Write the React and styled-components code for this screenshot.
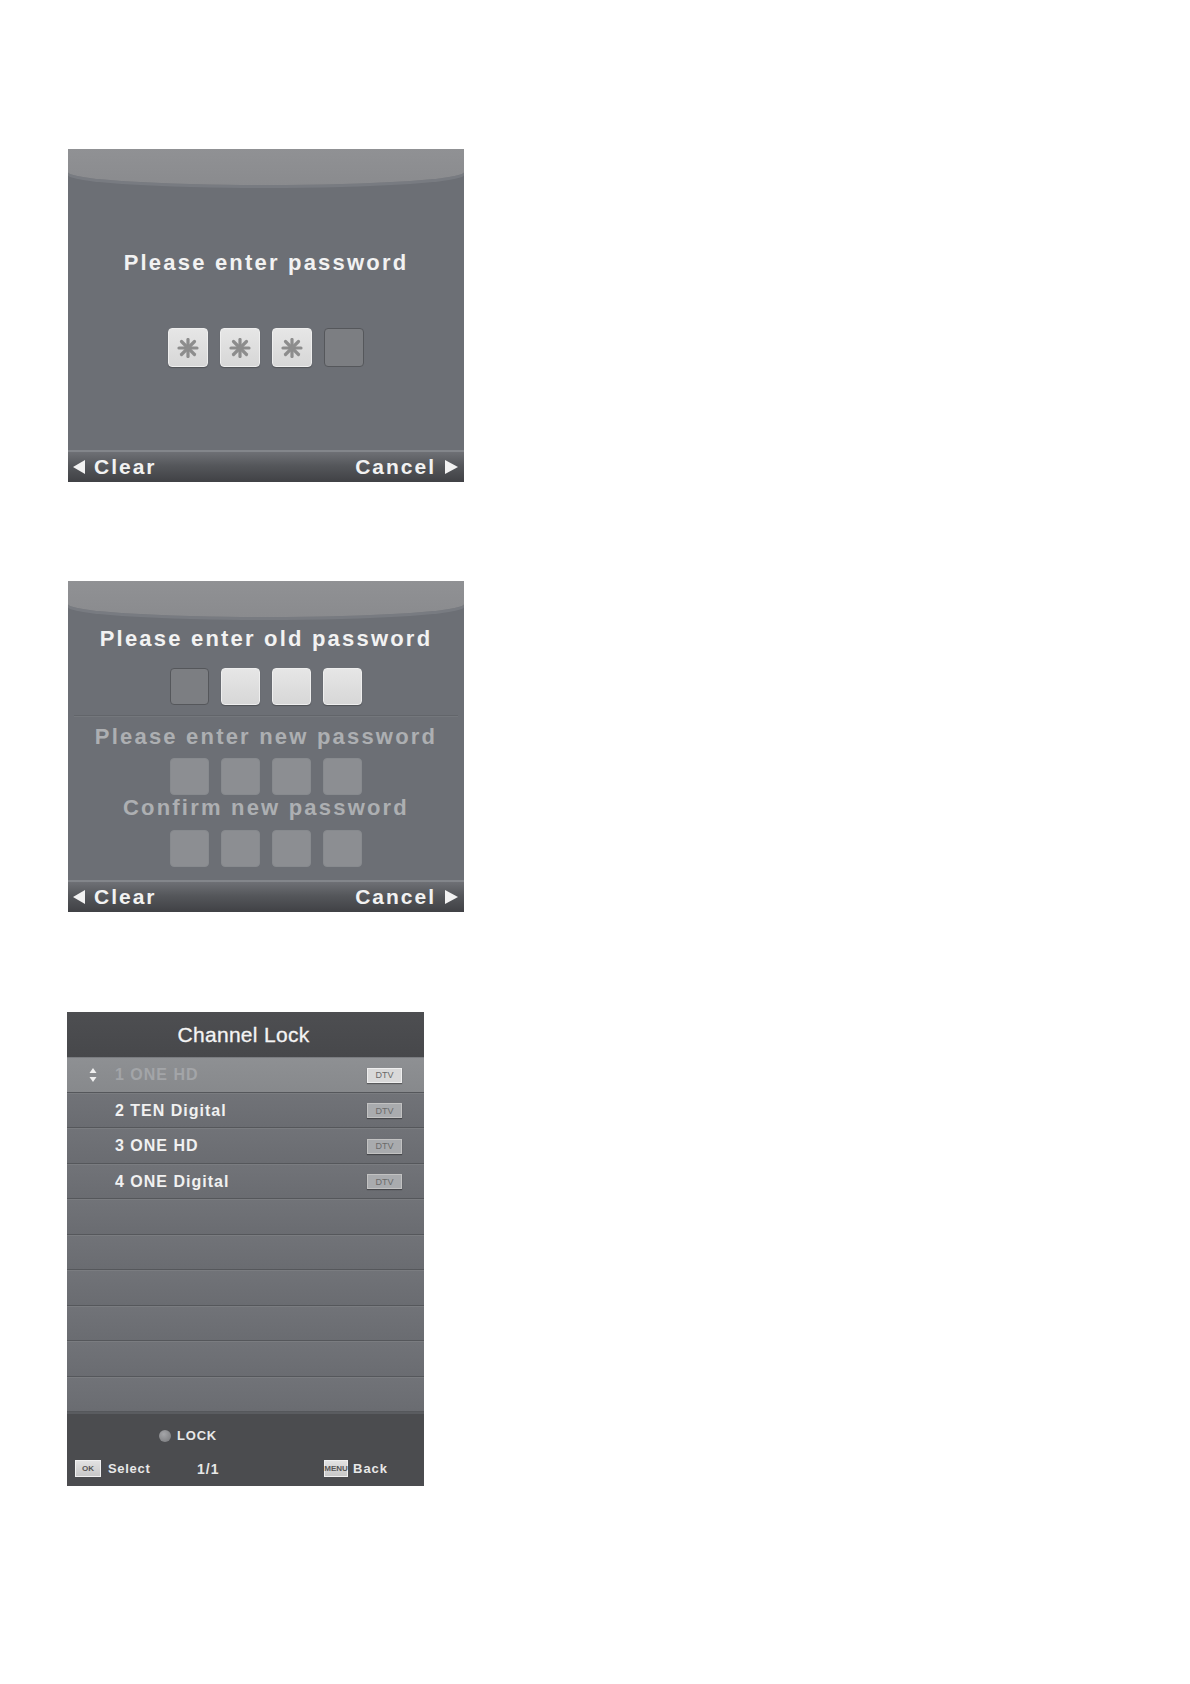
import styled, { createGlobalStyle } from "styled-components";

const GlobalStyle = createGlobalStyle`
  html, body { margin: 0; padding: 0; background: #fff; }
  body { font-family: "Liberation Sans", Arial, sans-serif; }
`;

const Page = styled.div`
  display: flex;
  flex-direction: column;
  align-items: flex-start;
  padding: 149px 0 0 68px;
  gap: 99px;
`;

/* ---------- password dialogs ---------- */
const Dialog = styled.div`
  width: 396px;
  height: ${(p) => p.h}px;
  background: #6c6f75;
  display: flex;
  flex-direction: column;
  overflow: hidden;
`;

const TopBand = styled.div`
  height: 36px;
  flex: none;
  background: linear-gradient(#909194, #8a8b8e);
  border-radius: 0 0 50% 50% / 0 0 13px 13px;
  box-shadow: 0 3px 0 #787b81;
`;

const Body = styled.div`
  flex: 1;
  display: flex;
  flex-direction: column;
  align-items: center;
  padding-top: ${(p) => p.pt}px;
`;

const Prompt = styled.div`
  font-size: 22px;
  line-height: 26px;
  font-weight: bold;
  letter-spacing: 2.2px;
  color: ${(p) => (p.dim ? "#adafb2" : "#f2f2f2")};
  margin-top: ${(p) => p.mt || 0}px;
  white-space: nowrap;
`;

const BoxRow = styled.div`
  display: flex;
  gap: 12px;
  margin-top: ${(p) => p.mt || 0}px;
`;

const Box = styled.div`
  width: ${(p) => p.w}px;
  height: ${(p) => p.hgt}px;
  border-radius: 4px;
  box-sizing: border-box;
  display: flex;
  align-items: center;
  justify-content: center;
  ${(p) =>
    p.kind === "light"
      ? `background: linear-gradient(#e6e6e6, #d7d7d7);
         border: 1px solid #eeeeee;
         box-shadow: 0 1px 1px rgba(0,0,0,0.25);`
      : p.kind === "active"
      ? `background: #7c7e82;
         border: 1px solid #55575b;`
      : `background: #8c8e92;
         border: 1px solid #878a8e;`}
`;

const Divider = styled.div`
  align-self: stretch;
  margin: 10px 6px 0;
  height: 1px;
  background: #62656a;
  box-shadow: 0 1px 0 #74777c;
`;

const Footer = styled.div`
  height: 32px;
  flex: none;
  display: flex;
  align-items: center;
  justify-content: space-between;
  padding: 0 6px 0 5px;
  border-top: 2px solid #83868b;
  background: linear-gradient(#6e7075, #55575b 45%, #404145);
  box-sizing: border-box;
`;

const FootKey = styled.div`
  display: flex;
  align-items: center;
  gap: 9px;
  font-size: 21px;
  font-weight: bold;
  letter-spacing: 2px;
  color: #f2f2f2;
`;

const Asterisk = () => (
  <svg width="22" height="20" viewBox="0 0 22 20">
    <g stroke="#8d8d8d" strokeWidth="3.2" strokeLinecap="round">
      <line x1="11" y1="1.5" x2="11" y2="18.5" />
      <line x1="2" y1="10" x2="20" y2="10" />
      <line x1="4.5" y1="3.5" x2="17.5" y2="16.5" />
      <line x1="17.5" y1="3.5" x2="4.5" y2="16.5" />
    </g>
  </svg>
);

const TriLeft = () => (
  <svg width="12" height="14" viewBox="0 0 12 14">
    <polygon points="12,0 12,14 0,7" fill="#f2f2f2" />
  </svg>
);

const TriRight = () => (
  <svg width="13" height="14" viewBox="0 0 13 14">
    <polygon points="0,0 13,7 0,14" fill="#f2f2f2" />
  </svg>
);

const DialogFooter = () => (
  <Footer>
    <FootKey>
      <TriLeft />
      <span>Clear</span>
    </FootKey>
    <FootKey>
      <span>Cancel</span>
      <TriRight />
    </FootKey>
  </Footer>
);

const EnterPassword = () => (
  <Dialog h={333}>
    <TopBand />
    <Body pt={65}>
      <Prompt>Please enter password</Prompt>
      <BoxRow mt={52}>
        {["light", "light", "light"].map((k, i) => (
          <Box key={i} kind={k} w={40} hgt={39}>
            <Asterisk />
          </Box>
        ))}
        <Box kind="active" w={40} hgt={39} />
      </BoxRow>
    </Body>
    <DialogFooter />
  </Dialog>
);

const ChangePassword = () => (
  <Dialog h={331}>
    <TopBand />
    <Body pt={9}>
      <Prompt>Please enter old password</Prompt>
      <BoxRow mt={16}>
        <Box kind="active" w={39} hgt={37} />
        <Box kind="light" w={39} hgt={37} />
        <Box kind="light" w={39} hgt={37} />
        <Box kind="light" w={39} hgt={37} />
      </BoxRow>
      <Divider />
      <Prompt dim mt={8}>Please enter new password</Prompt>
      <BoxRow mt={8}>
        {[0, 1, 2, 3].map((i) => (
          <Box key={i} kind="dim" w={39} hgt={37} />
        ))}
      </BoxRow>
      <Prompt dim>Confirm new password</Prompt>
      <BoxRow mt={9}>
        {[0, 1, 2, 3].map((i) => (
          <Box key={i} kind="dim" w={39} hgt={37} />
        ))}
      </BoxRow>
    </Body>
    <DialogFooter />
  </Dialog>
);

/* ---------- channel lock ---------- */
const LockPanel = styled.div`
  width: 357px;
  margin-left: -1px;
  margin-top: 1px;
  display: flex;
  flex-direction: column;
  background: #6d6f74;
`;

const LockHeader = styled.div`
  height: 45px;
  display: flex;
  align-items: center;
  justify-content: center;
  background: linear-gradient(#4d4e51, #47484b);
  color: #f4f4f4;
  font-size: 21px;
  letter-spacing: 0.3px;
  -webkit-text-stroke: 0.3px #f4f4f4;
  padding-right: 4px;
`;

const Row = styled.div`
  height: 35.5px;
  box-sizing: border-box;
  display: flex;
  align-items: center;
  padding: 2px 22px 0 22px;
  border-bottom: 1px solid #55575b;
  box-shadow: inset 0 1px 0 #7a7c80;
  background: ${(p) =>
    p.selected
      ? "linear-gradient(#8e9093, #87898c)"
      : "linear-gradient(#717378, #6a6c71)"};
`;

const Mover = styled.div`
  width: 26px;
  display: flex;
  align-items: center;
`;

const ChName = styled.div`
  flex: 1;
  font-size: 16px;
  font-weight: bold;
  letter-spacing: 1px;
  color: ${(p) => (p.selected ? "#a3a5a8" : "#f1f1f1")};
`;

const Tag = styled.div`
  width: 35px;
  height: 15px;
  box-sizing: border-box;
  display: flex;
  align-items: center;
  justify-content: center;
  border: 1px solid ${(p) => (p.selected ? "#eeeeee" : "#c2c2c2")};
  background: ${(p) => (p.selected ? "#d9d9d9" : "#a9abae")};
  box-shadow: 0 1px 1px rgba(0, 0, 0, 0.35);
  font-size: 9px;
  color: #6a6a6a;
`;

const LockFooter = styled.div`
  height: 74px;
  box-sizing: border-box;
  border-top: 2px solid #5a5c60;
  background: #4b4c4f;
  display: flex;
  flex-direction: column;
  padding: 14px 0 0 8px;
  gap: 17px;
  color: #e8e8e8;
  font-weight: bold;
`;

const FootLine = styled.div`
  display: flex;
  align-items: center;
  padding-left: ${(p) => p.pl || 0}px;
`;

const Cell = styled.div`
  width: ${(p) => p.w}px;
  display: flex;
  align-items: center;
  gap: 7px;
  font-size: ${(p) => p.fs || 13}px;
  letter-spacing: ${(p) => p.ls || 0.7}px;
`;

const Dot = styled.span`
  width: 12px;
  height: 12px;
  border-radius: 50%;
  background: radial-gradient(circle at 40% 35%, #a4a5a8, #76777a);
  margin-right: 6px;
`;

const KeyCap = styled.span`
  width: ${(p) => p.w}px;
  height: 17px;
  box-sizing: border-box;
  display: inline-flex;
  align-items: center;
  justify-content: center;
  background: linear-gradient(#e2e2e2, #c8c8c8);
  border: 1px solid #f0f0f0;
  font-size: 8px;
  letter-spacing: 0;
  color: #555;
`;

const UpDown = () => (
  <svg width="8" height="16" viewBox="0 0 8 16">
    <polygon points="4,1 7.5,6 0.5,6" fill="#f0f0f0" />
    <polygon points="0.5,10 7.5,10 4,15" fill="#f0f0f0" />
  </svg>
);

const channels = [
  "1 ONE HD",
  "2 TEN Digital",
  "3 ONE HD",
  "4 ONE Digital",
  null,
  null,
  null,
  null,
  null,
  null,
];

const ChannelLock = () => (
  <LockPanel>
    <LockHeader>Channel Lock</LockHeader>
    {channels.map((name, i) => (
      <Row key={i} selected={i === 0}>
        {name && (
          <>
            <Mover>{i === 0 && <UpDown />}</Mover>
            <ChName selected={i === 0}>{name}</ChName>
            <Tag selected={i === 0}>DTV</Tag>
          </>
        )}
      </Row>
    ))}
    <LockFooter>
      <FootLine pl={84}>
        <Dot />
        <Cell w={60} fs={13} ls={0.8}>
          LOCK
        </Cell>
      </FootLine>
      <FootLine>
        <Cell w={122}>
          <KeyCap w={26}>OK</KeyCap>
          <span>Select</span>
        </Cell>
        <Cell w={127} fs={14} ls={1}>
          1/1
        </Cell>
        <Cell w={80} ls={1}>
          <KeyCap w={24}>MENU</KeyCap>
          <span style={{ marginLeft: -2 }}>Back</span>
        </Cell>
      </FootLine>
    </LockFooter>
  </LockPanel>
);

export default function App() {
  return (
    <>
      <GlobalStyle />
      <Page>
        <EnterPassword />
        <ChangePassword />
        <ChannelLock />
      </Page>
    </>
  );
}
